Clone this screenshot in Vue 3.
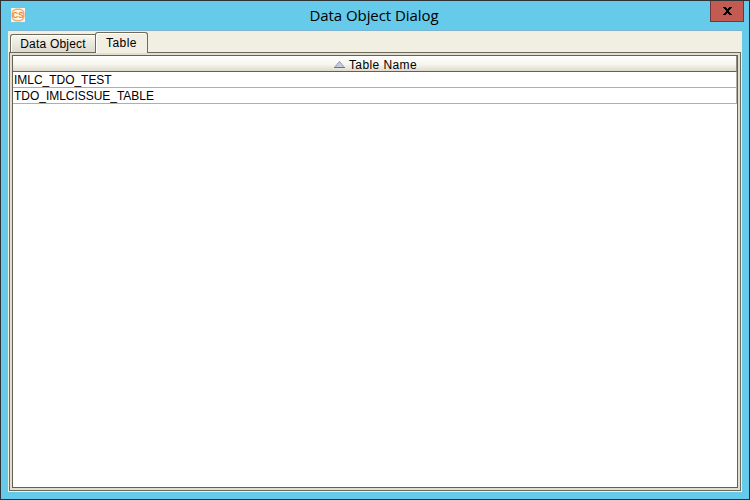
<script setup>
const tabs = [
  { label: 'Data Object', active: false },
  { label: 'Table', active: true },
]
const rows = ['IMLC_TDO_TEST', 'TDO_IMLCISSUE_TABLE']
</script>

<template>
  <div class="window">
    <header class="titlebar">
      <svg class="logo" width="14" height="14" viewBox="0 0 14 14">
        <rect width="14" height="14" fill="#fdf3e6" />
        <rect x="1.2" y="1.2" width="11.6" height="11.6" rx="4.5" fill="none" stroke="#f3ad70" stroke-width="1.5" />
        <text x="7" y="10" text-anchor="middle" textLength="11" lengthAdjust="spacingAndGlyphs">CS</text>
      </svg>
      <h1 class="title">Data Object Dialog</h1>
      <button class="close" aria-label="Close">
        <svg width="9" height="8" viewBox="0 0 9 8" shape-rendering="crispEdges">
          <path d="M0 0h3v1h1v1h1V1h1V0h3v1H8v1H7v1H6v2h1v1h1v1h1v1H6V7H5V6H4v1H3v1H0V7h1V6h1V5h1V3H2V2H1V1H0z" fill="#000" />
        </svg>
      </button>
    </header>
    <main class="content">
      <nav class="tabs">
        <div v-for="tab in tabs" :key="tab.label" class="tab" :class="{ active: tab.active }">
          <span class="tab-text">{{ tab.label }}</span>
        </div>
      </nav>
      <section class="pane">
        <div class="table">
          <div class="head">
            <svg class="sort" width="11" height="7" viewBox="0 0 11 7">
              <path d="M5.500 0L11 7H0z" fill="#c5cbe3" />
              <path d="M5.500 .5L.5 6.500" stroke="#777fa0" stroke-dasharray="1.500 .7" fill="none" />
              <path d="M5.500 .5L10.500 6.500" stroke="#8a8a84" stroke-dasharray="1.500 .7" fill="none" />
              <path d="M0 6.500h11" stroke="#686f96" />
            </svg>
            <span class="head-text">Table Name</span>
          </div>
          <div v-for="row in rows" :key="row" class="row">
            <span class="row-text">{{ row }}</span>
          </div>
        </div>
      </section>
    </main>
  </div>
</template>

<style>
body { margin: 0; overflow: hidden; }
</style>

<style scoped>
.window {
  box-sizing: border-box;
  width: 750px;
  height: 500px;
  border: 1px solid #2f3336;
  background: #66caea;
  padding: 0 7px 7px;
  display: flex;
  flex-direction: column;
  font-family: "Liberation Sans", Arial, sans-serif;
  font-size: 12px;
  color: #000;
}
.titlebar {
  height: 29px;
  flex: none;
  display: grid;
  grid-template-columns: 35px 1fr 37px;
  align-items: start;
}
.logo { margin: 7px 0 0 3px; display: block; }
.logo text { font: bold 8.5px "Liberation Sans", sans-serif; fill: #ea8532; }
.title {
  margin: 3px 0 0;
  text-align: center;
  font: 400 15px/22px "Open Sans", "Noto Sans", sans-serif;
  letter-spacing: -0.06px;
  color: #000;
}
.close {
  box-sizing: border-box;
  width: 34px;
  height: 21px;
  margin: 0 -2px 0 0;
  justify-self: end;
  padding: 0;
  border: 1px solid #673b3b;
  border-top: 0;
  background: #c45b52;
  display: flex;
  align-items: center;
  justify-content: center;
}
.content {
  flex: 1;
  display: flex;
  flex-direction: column;
  box-sizing: border-box;
  background: #f1eee2;
  border-top: 1px solid #7fb3cf;
  padding: 0 1px 1px;
}
.tabs {
  height: 21px;
  display: flex;
  align-items: flex-end;
  padding-left: 1px;
}
.tab {
  box-sizing: border-box;
  width: 85px;
  height: 18px;
  border: 1px solid #6b6a5b;
  border-right-width: 0;
  border-bottom: 0;
  border-radius: 3px 0 0 0;
  background: linear-gradient(#f8f6ed, #dedace);
  box-shadow: inset 1px 1px #fff;
  text-align: center;
  line-height: 18px;
  letter-spacing: .2px;
}
.tab.active {
  width: 53px;
  height: 21px;
  margin-bottom: -1px;
  border-right-width: 1px;
  border-radius: 3px 3px 0 0;
  background: #f1eee2;
  line-height: 20px;
  letter-spacing: .45px;
  position: relative;
}
.pane {
  flex: 1;
  display: flex;
  box-sizing: border-box;
  border: 1px solid #6b6a5b;
  padding: 2px;
  background: #e2dfd0;
}
.table {
  flex: 1;
  box-sizing: border-box;
  border: 1px solid #626154;
  background: #fff;
}
.head {
  box-sizing: border-box;
  height: 16px;
  border-bottom: 1px solid #626154;
  border-right: 1px solid #8f8e7f;
  padding-left: 2px;
  background: linear-gradient(#fff, #f7f5ed 55%, #dedbcd);
  display: flex;
  align-items: center;
  justify-content: center;
  gap: 4px;
}
.sort { margin-top: 2px; }
.head-text { line-height: 16px; letter-spacing: .42px; padding-top: 2px; }
.row {
  box-sizing: border-box;
  height: 16px;
  border-bottom: 1px solid #b0afa6;
  border-right: 1px solid #b0afa6;
  padding-left: 1px;
  line-height: 17px;
  letter-spacing: -.03px;
}
</style>
